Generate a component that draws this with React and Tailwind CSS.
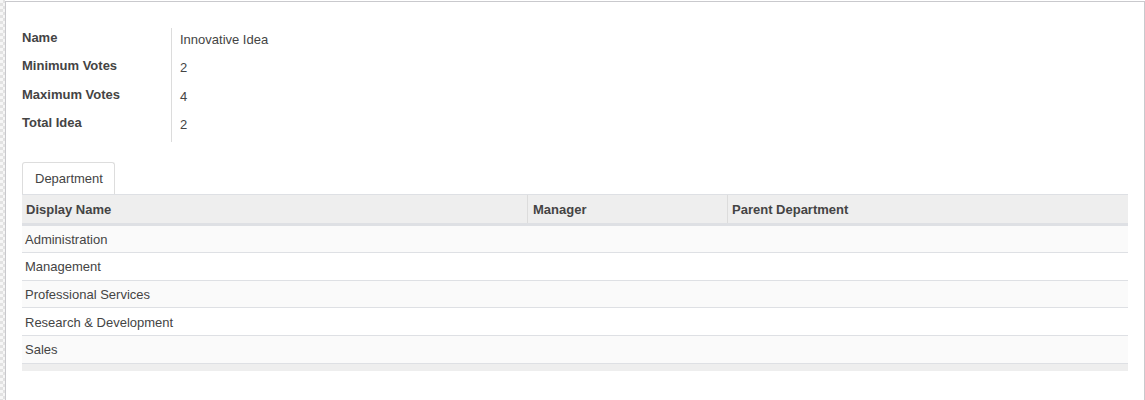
import React from "react";

const fields = [
  ["Name", "Innovative Idea"],
  ["Minimum Votes", "2"],
  ["Maximum Votes", "4"],
  ["Total Idea", "2"],
];

const rows = [
  "Administration",
  "Management",
  "Professional Services",
  "Research & Development",
  "Sales",
];

export default function App() {
  return (
    <div
      className="flex h-[400px] w-[1145px] bg-white text-[13px] leading-[18px] text-[#444444]"
      style={{ fontFamily: '"Liberation Sans", Arial, sans-serif' }}
    >
      <div className="w-[5px] bg-[image:repeating-conic-gradient(#e2e2e2_0%_25%,#f6f6f6_0%_50%)] bg-[length:6px_6px]" />
      <div className="flex-1 pt-[1px]">
        <div className="h-full border-l border-t border-r border-[#c9c9cd] pl-[16px] pr-[15px]">
          {/* form */}
          <div className="mt-[26px] flex">
            <div className="w-[149px]">
              {fields.map(([l]) => (
                <div key={l} className="h-[28.4px] pt-[1px] font-bold">
                  {l}
                </div>
              ))}
            </div>
            <div className="border-l border-[#dcdcdc] pl-[8px]">
              {fields.map(([l, v]) => (
                <div key={l} className="h-[28.4px] pt-[3px]">
                  {v}
                </div>
              ))}
            </div>
          </div>

          {/* tabs */}
          <div className="mt-[20px] flex">
            <div className="rounded-t-[3px] border-l border-t border-r border-[#dddddd] bg-white pl-[12px] pr-[11px] pt-[7px] pb-[6px]">
              Department
            </div>
          </div>

          {/* table */}
          <div className="w-[1106px]">
            <div className="flex h-[32px] border-t border-b-[3px] border-[#dee0e4] bg-[#eeeeee] font-bold">
              <div className="flex w-[505px] items-center pl-[4px] pt-[2px]">Display Name</div>
              <div className="flex w-[200px] items-center border-l border-[#dcdcdc] pl-[5px] pt-[2px]">Manager</div>
              <div className="flex flex-1 items-center border-l border-[#dcdcdc] pl-[4px] pt-[2px]">Parent Department</div>
            </div>
            {rows.map((r, i) => (
              <div
                key={r}
                className={
                  "flex h-[27.6px] items-center border-b border-[#dee0e4] pl-[3px] pt-[2px] " +
                  (i % 2 === 0 ? "bg-[#fafafa]" : "bg-white")
                }
              >
                {r}
              </div>
            ))}
            <div className="h-[7px] bg-[#eeeeee]" />
          </div>
        </div>
      </div>
    </div>
  );
}
